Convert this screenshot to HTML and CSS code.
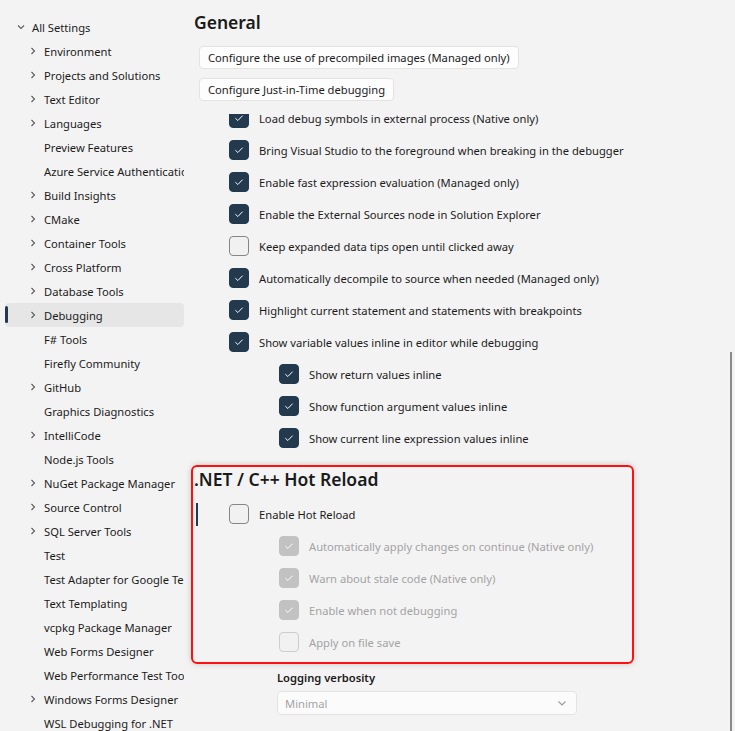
FILE: index.html
```html
<!DOCTYPE html>
<html lang="en">
<head>
    <meta charset="UTF-8">
    <meta name="viewport" content="width=device-width, initial-scale=1.0">
    <title>Options - Debugging</title>
    <link rel="stylesheet" href="styles.css">
</head>
<body>

    <!-- settings tree -->
    <nav class="tree">
        <div class="tree-root">
            <svg class="chev" viewBox="0 0 12 12"><path d="M3 4.5 L6 7.5 L9 4.5"/></svg>
            <span>All Settings</span>
        </div>
        <div class="node"><svg class="chev" viewBox="0 0 12 12"><path d="M4.5 3 L7.5 6 L4.5 9"/></svg><span>Environment</span></div>
        <div class="node"><svg class="chev" viewBox="0 0 12 12"><path d="M4.5 3 L7.5 6 L4.5 9"/></svg><span>Projects and Solutions</span></div>
        <div class="node"><svg class="chev" viewBox="0 0 12 12"><path d="M4.5 3 L7.5 6 L4.5 9"/></svg><span>Text Editor</span></div>
        <div class="node"><svg class="chev" viewBox="0 0 12 12"><path d="M4.5 3 L7.5 6 L4.5 9"/></svg><span>Languages</span></div>
        <div class="node"><i class="chev"></i><span>Preview Features</span></div>
        <div class="node"><i class="chev"></i><span>Azure Service Authentication</span></div>
        <div class="node"><svg class="chev" viewBox="0 0 12 12"><path d="M4.5 3 L7.5 6 L4.5 9"/></svg><span>Build Insights</span></div>
        <div class="node"><svg class="chev" viewBox="0 0 12 12"><path d="M4.5 3 L7.5 6 L4.5 9"/></svg><span>CMake</span></div>
        <div class="node"><svg class="chev" viewBox="0 0 12 12"><path d="M4.5 3 L7.5 6 L4.5 9"/></svg><span>Container Tools</span></div>
        <div class="node"><svg class="chev" viewBox="0 0 12 12"><path d="M4.5 3 L7.5 6 L4.5 9"/></svg><span>Cross Platform</span></div>
        <div class="node"><svg class="chev" viewBox="0 0 12 12"><path d="M4.5 3 L7.5 6 L4.5 9"/></svg><span>Database Tools</span></div>
        <div class="node selected"><svg class="chev" viewBox="0 0 12 12"><path d="M4.5 3 L7.5 6 L4.5 9"/></svg><span>Debugging</span></div>
        <div class="node"><i class="chev"></i><span>F# Tools</span></div>
        <div class="node"><i class="chev"></i><span>Firefly Community</span></div>
        <div class="node"><svg class="chev" viewBox="0 0 12 12"><path d="M4.5 3 L7.5 6 L4.5 9"/></svg><span>GitHub</span></div>
        <div class="node"><i class="chev"></i><span>Graphics Diagnostics</span></div>
        <div class="node"><svg class="chev" viewBox="0 0 12 12"><path d="M4.5 3 L7.5 6 L4.5 9"/></svg><span>IntelliCode</span></div>
        <div class="node"><i class="chev"></i><span>Node.js Tools</span></div>
        <div class="node"><svg class="chev" viewBox="0 0 12 12"><path d="M4.5 3 L7.5 6 L4.5 9"/></svg><span>NuGet Package Manager</span></div>
        <div class="node"><svg class="chev" viewBox="0 0 12 12"><path d="M4.5 3 L7.5 6 L4.5 9"/></svg><span>Source Control</span></div>
        <div class="node"><svg class="chev" viewBox="0 0 12 12"><path d="M4.5 3 L7.5 6 L4.5 9"/></svg><span>SQL Server Tools</span></div>
        <div class="node"><i class="chev"></i><span>Test</span></div>
        <div class="node"><i class="chev"></i><span>Test Adapter for Google Test</span></div>
        <div class="node"><i class="chev"></i><span>Text Templating</span></div>
        <div class="node"><i class="chev"></i><span>vcpkg Package Manager</span></div>
        <div class="node"><i class="chev"></i><span>Web Forms Designer</span></div>
        <div class="node"><i class="chev"></i><span>Web Performance Test Tools</span></div>
        <div class="node"><svg class="chev" viewBox="0 0 12 12"><path d="M4.5 3 L7.5 6 L4.5 9"/></svg><span>Windows Forms Designer</span></div>
        <div class="node"><i class="chev"></i><span>WSL Debugging for .NET</span></div>
    </nav>

    <main class="page">
        <h2 class="section-title">General</h2>
        <button class="btn">Configure the use of precompiled images (Managed only)</button>
        <button class="btn">Configure Just-in-Time debugging</button>

        <div class="clip">
            <div class="options">
                <label class="opt"><span class="box checked"><svg viewBox="0 0 20 20"><path d="M6 10.2 L8.7 12.8 L14 7.4"/></svg></span>Load debug symbols in external process (Native only)</label>
                <label class="opt"><span class="box checked"><svg viewBox="0 0 20 20"><path d="M6 10.2 L8.7 12.8 L14 7.4"/></svg></span>Bring Visual Studio to the foreground when breaking in the debugger</label>
                <label class="opt"><span class="box checked"><svg viewBox="0 0 20 20"><path d="M6 10.2 L8.7 12.8 L14 7.4"/></svg></span>Enable fast expression evaluation (Managed only)</label>
                <label class="opt"><span class="box checked"><svg viewBox="0 0 20 20"><path d="M6 10.2 L8.7 12.8 L14 7.4"/></svg></span>Enable the External Sources node in Solution Explorer</label>
                <label class="opt"><span class="box"></span>Keep expanded data tips open until clicked away</label>
                <label class="opt"><span class="box checked"><svg viewBox="0 0 20 20"><path d="M6 10.2 L8.7 12.8 L14 7.4"/></svg></span>Automatically decompile to source when needed (Managed only)</label>
                <label class="opt"><span class="box checked"><svg viewBox="0 0 20 20"><path d="M6 10.2 L8.7 12.8 L14 7.4"/></svg></span>Highlight current statement and statements with breakpoints</label>
                <label class="opt"><span class="box checked"><svg viewBox="0 0 20 20"><path d="M6 10.2 L8.7 12.8 L14 7.4"/></svg></span>Show variable values inline in editor while debugging</label>
                <label class="opt sub"><span class="box checked"><svg viewBox="0 0 20 20"><path d="M6 10.2 L8.7 12.8 L14 7.4"/></svg></span>Show return values inline</label>
                <label class="opt sub"><span class="box checked"><svg viewBox="0 0 20 20"><path d="M6 10.2 L8.7 12.8 L14 7.4"/></svg></span>Show function argument values inline</label>
                <label class="opt sub"><span class="box checked"><svg viewBox="0 0 20 20"><path d="M6 10.2 L8.7 12.8 L14 7.4"/></svg></span>Show current line expression values inline</label>
            </div>
        </div>

        <section class="hot-reload">
            <h2 class="section-title">.NET / C++ Hot Reload</h2>
            <label class="opt focused"><i class="focus-bar"></i><span class="box"></span>Enable Hot Reload</label>
            <label class="opt sub disabled"><span class="box checked"><svg viewBox="0 0 20 20"><path d="M6 10.2 L8.7 12.8 L14 7.4"/></svg></span>Automatically apply changes on continue (Native only)</label>
            <label class="opt sub disabled"><span class="box checked"><svg viewBox="0 0 20 20"><path d="M6 10.2 L8.7 12.8 L14 7.4"/></svg></span>Warn about stale code (Native only)</label>
            <label class="opt sub disabled"><span class="box checked"><svg viewBox="0 0 20 20"><path d="M6 10.2 L8.7 12.8 L14 7.4"/></svg></span>Enable when not debugging</label>
            <label class="opt sub disabled"><span class="box"></span>Apply on file save</label>
        </section>

        <div class="field">
            <div class="field-label">Logging verbosity</div>
            <div class="select">
                <span>Minimal</span>
                <svg viewBox="0 0 12 12"><path d="M2.5 4.5 L6 8 L9.5 4.5"/></svg>
            </div>
        </div>
    </main>

    <div class="scrollbar"><div class="thumb"></div></div>

</body>
</html>
```

FILE: styles.css
```css
:root {
    --background: #f3f3f3;
    --text-dark: #1b1b1b;
    --text-disabled: #a3a3a3;
    --chevron: #5c5c5c;
    --accent: #233a4e;
    --selected: #e6e6e6;
    --border: #e3e3e3;
    --highlight: #ff1010;
}

* {
    box-sizing: border-box;
    margin: 0;
    padding: 0;
}

body {
    font-family: 'Noto Sans', 'Segoe UI', sans-serif;
    font-size: 11.2px;
    background-color: var(--background);
    color: var(--text-dark);
    height: 731px;
    overflow: hidden;
    display: flex;
}

/* tree */

.tree {
    width: 184px;
    flex-shrink: 0;
    padding: 15px 0 0 5px;
    overflow: hidden;
    white-space: nowrap;
}

.tree-root,
.node {
    height: 24px;
    display: flex;
    align-items: center;
    gap: 5px;
}

.tree-root {
    padding-left: 10px;
}

.node {
    padding-left: 22px;
    border-radius: 4px;
    position: relative;
}

.chev {
    width: 12px;
    height: 12px;
    flex-shrink: 0;
    fill: none;
    stroke: var(--chevron);
    stroke-width: 1.1;
}

.node.selected {
    background-color: var(--selected);
}

.node.selected::before {
    content: "";
    position: absolute;
    left: 0;
    top: 3px;
    width: 3px;
    height: 17px;
    border-radius: 2px;
    background-color: var(--accent);
}

/* page */

.page {
    flex: 1;
    padding: 8px 0 0 10px;
    display: flex;
    flex-direction: column;
    align-items: flex-start;
    white-space: nowrap;
}

.section-title {
    font-size: 17.5px;
    font-weight: 600;
    line-height: 28px;
    color: #1a1a1a;
}

.btn {
    font-family: inherit;
    font-size: 11.2px;
    color: var(--text-dark);
    height: 23px;
    padding: 0 8px;
    margin: 10px 0 0 5px;
    background: #fdfdfd;
    border: 1px solid var(--border);
    border-radius: 4px;
}

.btn + .btn {
    margin-top: 9px;
}

.clip {
    margin-top: 13px;
    overflow: hidden;
}

.options {
    margin-top: -12px;
}

.opt {
    height: 32px;
    display: flex;
    align-items: center;
    gap: 10px;
    padding-left: 35px;
}

.opt.sub {
    padding-left: 85px;
}

.box {
    width: 20px;
    height: 20px;
    flex-shrink: 0;
    border-radius: 4px;
    border: 1px solid #868686;
    background: #f1f1f1;
}

.box.checked {
    border-color: var(--accent);
    background: var(--accent);
}

.box svg {
    display: block;
    width: 18px;
    height: 18px;
    fill: none;
    stroke: #ffffff;
    stroke-width: 1.1;
}

.disabled {
    color: var(--text-disabled);
}

.disabled .box {
    border-color: #cdcdcd;
}

.disabled .box.checked {
    border-color: #c2c2c2;
    background: #c2c2c2;
}

/* hot reload block */

.hot-reload {
    margin: 11px 0 0 -3px;
    width: 443px;
    padding: 0 0 4px 1px;
    border: 2px solid var(--highlight);
    border-radius: 6px;
    box-shadow: 0 0 6px rgba(0, 0, 0, 0.18);
}

.hot-reload .section-title {
    line-height: 24px;
}

.opt.focused {
    margin-top: 7px;
    padding-left: 2px;
}

.focus-bar {
    width: 2px;
    height: 23px;
    background-color: var(--accent);
    margin-right: 21px;
}

.field {
    margin: 5px 0 0 83px;
}

.field-label {
    font-weight: 600;
    line-height: 18px;
}

.select {
    margin-top: 4px;
    width: 300px;
    height: 24px;
    padding: 0 8px 0 7px;
    display: flex;
    align-items: center;
    justify-content: space-between;
    background: #fbfbfb;
    border: 1px solid var(--border);
    border-radius: 4px;
    color: var(--text-disabled);
}

.select svg {
    width: 12px;
    height: 12px;
    fill: none;
    stroke: #9a9a9a;
    stroke-width: 1.1;
}

/* scrollbar */

.scrollbar {
    width: 7px;
    flex-shrink: 0;
    padding: 352px 0 0 2px;
}

.thumb {
    width: 2px;
    height: 100%;
    background-color: #8a8a8a;
}
```
